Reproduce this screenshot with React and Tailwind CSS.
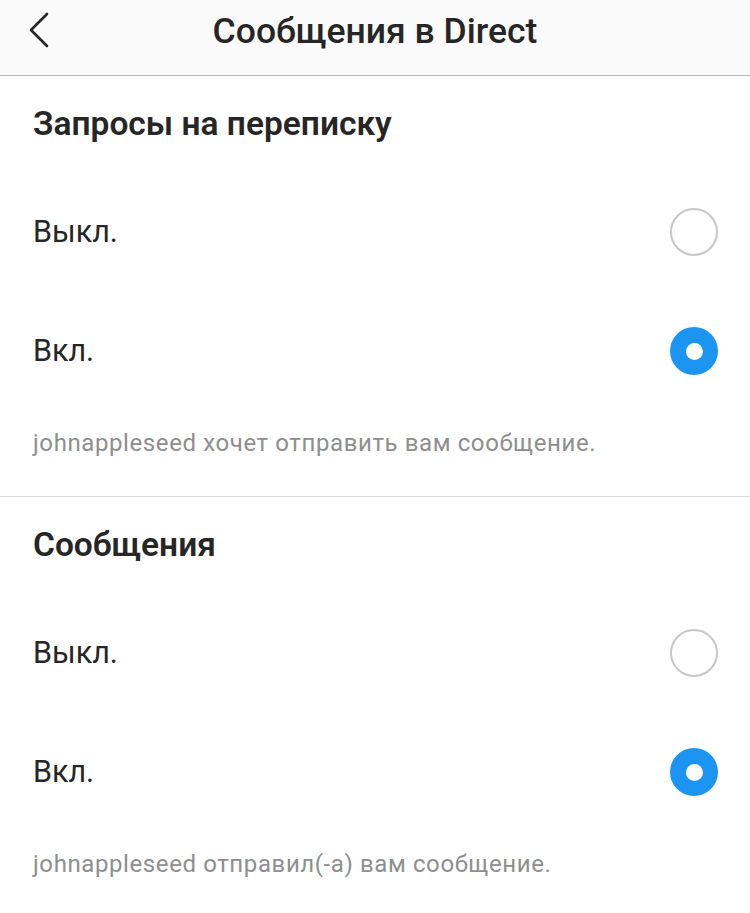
import React from "react";

const font = { fontFamily: "Roboto, 'Noto Sans', sans-serif" };

function Radio({ checked }) {
  if (checked) {
    return (
      <div className="w-[48px] h-[48px] rounded-full bg-[#1b95f1] flex items-center justify-center">
        <div className="w-[17px] h-[17px] rounded-full bg-white" />
      </div>
    );
  }
  return <div className="w-[48px] h-[48px] rounded-full border-2 border-[#c7c7c7]" />;
}

function Row({ label, checked, h }) {
  return (
    <div className={`flex items-center justify-between pl-[33px] pr-[32px] ${h}`}>
      <span className="text-[30.5px] text-[#262626]">{label}</span>
      <Radio checked={checked} />
    </div>
  );
}

function Section({ title, desc }) {
  return (
    <div>
      <div className="h-[96px] flex items-center pl-[33px]">
        <span className="text-[33.5px] font-semibold text-[#262626]">{title}</span>
      </div>
      <Row label="Выкл." checked={false} h="h-[120px]" />
      <Row label="Вкл." checked={true} h="h-[118px]" />
      <div className="h-[86px] pl-[33px] pt-[19px]">
        <span className="text-[24px] leading-[28px] tracking-[0.6px] text-[#8e8e8e]">{desc}</span>
      </div>
    </div>
  );
}

export default function App() {
  return (
    <div className="w-[750px] h-[913px] bg-white overflow-hidden" style={font}>
      <div className="h-[76px] bg-[#fafafa] border-b border-[#b5b5b5] relative flex items-center justify-center">
        <svg className="absolute left-[26px] top-[12px]" width="26" height="36" viewBox="0 0 26 36">
          <path d="M21 2 L5 18 L21 34" fill="none" stroke="#262626" strokeWidth="2.6" strokeLinecap="round" strokeLinejoin="round" />
        </svg>
        <span className="text-[35.5px] font-medium text-[#262626] -mt-[12px]">Сообщения в Direct</span>
      </div>
      <Section title="Запросы на переписку" desc="johnappleseed хочет отправить вам сообщение." />
      <div className="h-px bg-[#dbdbdb]" />
      <Section title="Сообщения" desc="johnappleseed отправил(-а) вам сообщение." />
    </div>
  );
}
